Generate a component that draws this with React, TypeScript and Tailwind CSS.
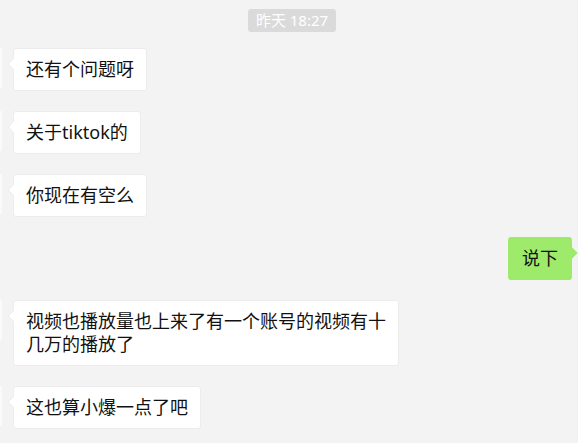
type Msg = { id: number; text: string; mine?: boolean };

const messages: Msg[] = [
  { id: 1, text: "还有个问题呀" },
  { id: 2, text: "关于tiktok的" },
  { id: 3, text: "你现在有空么" },
  { id: 4, text: "说下", mine: true },
  { id: 5, text: "视频也播放量也上来了有一个账号的视频有十几万的播放了" },
  { id: 6, text: "这也算小爆一点了吧" },
];

function Bubble({ msg }: { msg: Msg }) {
  if (msg.mine) {
    return (
      <div className="flex justify-end pr-[6px]">
        <div className="relative rounded-[3px] bg-[#9eea6a] px-[14px] py-[10px] text-[18px] leading-[23px] text-[#111]">
          {/* tail */}
          <span className="absolute right-[-4px] top-[12px] h-[8px] w-[8px] rotate-45 bg-[#9eea6a]" />
          <span className="relative">{msg.text}</span>
        </div>
      </div>
    );
  }

  return (
    <div className="flex items-start">
      {/* avatar, cropped by the window edge */}
      <div className="h-10 w-[2px] shrink-0 bg-[#f8fbfb]" />
      <div className="relative ml-[11px] max-w-[386px] rounded-[3px] border border-[#ececec] bg-white px-[12px] py-[9px] text-[18px] leading-[23px] text-[#111]">
        <span className="absolute left-[-5px] top-[11px] h-[8px] w-[8px] rotate-45 border-b border-l border-[#ececec] bg-white" />
        <span className="relative">{msg.text}</span>
      </div>
    </div>
  );
}

export default function App() {
  return (
    <div
      className="h-[443px] w-[578px] overflow-hidden bg-[#f3f3f3]"
      style={{ fontFamily: '"Noto Sans", "Noto Sans CJK SC", sans-serif' }}
    >
      {/* Time divider */}
      <div className="flex justify-center pt-[9px]">
        <span className="ml-[6px] rounded-[3px] bg-[#dadada] px-[8px] py-[2px] text-[15px] leading-[19px] text-white">
          昨天 18:27
        </span>
      </div>

      {/* Messages */}
      <div className="mt-[16px] flex flex-col gap-[20px]">
        {messages.map((m) => (
          <Bubble key={m.id} msg={m} />
        ))}
      </div>
    </div>
  );
}
